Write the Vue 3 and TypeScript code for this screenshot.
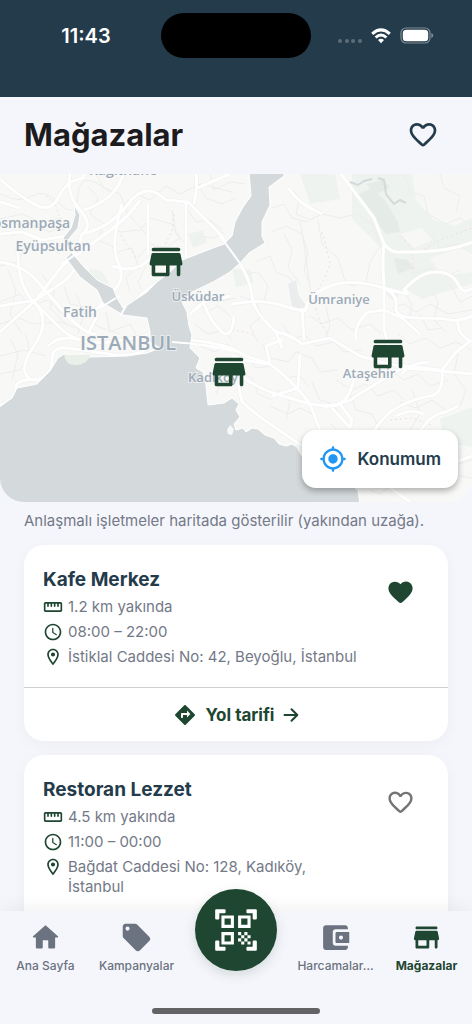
<script setup lang="ts">
import { ref } from 'vue'

interface Store {
  id: number
  name: string
  distance: string
  hours: string
  address: string
  favorite: boolean
}

interface Marker {
  name: string
  x: number
  y: number
}

interface Place {
  name: string
  x: number
  y: number
  size: number
}

interface NavItem {
  label: string
  icon: string
  active?: boolean
}

const icons = {
  store:
    'M5 6h14c.55 0 1-.45 1-1s-.45-1-1-1H5c-.55 0-1 .45-1 1s.45 1 1 1zm15.16 1.8c-.09-.46-.5-.8-.98-.8H4.82c-.48 0-.89.34-.98.8l-1 5c-.12.62.35 1.2.98 1.2H4v5c0 .55.45 1 1 1h8c.55 0 1-.45 1-1v-5h4v5c0 .55.45 1 1 1s1-.45 1-1v-5h.18c.63 0 1.1-.58.98-1.2l-1-5zM12 18H6v-4h6v4z',
  home:
    'M10 19v-5h4v5c0 .55.45 1 1 1h3c.55 0 1-.45 1-1v-7h1.7c.46 0 .68-.57.33-.87L12.67 3.6c-.38-.34-.96-.34-1.34 0l-8.36 7.53c-.34.3-.13.87.33.87H5v7c0 .55.45 1 1 1h3c.55 0 1-.45 1-1z',
  tag:
    'M21.41 11.58l-9-9C12.05 2.22 11.55 2 11 2H4c-1.1 0-2 .9-2 2v7c0 .55.22 1.05.59 1.42l9 9c.36.36.86.58 1.41.58s1.05-.22 1.41-.59l7-7c.37-.36.59-.86.59-1.41s-.23-1.06-.59-1.42zM5.5 7C4.67 7 4 6.33 4 5.5S4.67 4 5.5 4 7 4.67 7 5.5 6.33 7 5.5 7z',
  wallet:
    'M10 16V8c0-1.1.89-2 2-2h9V5c0-1.1-.9-2-2-2H5c-1.11 0-2 .9-2 2v14c0 1.1.89 2 2 2h14c1.1 0 2-.9 2-2v-1h-9c-1.11 0-2-.9-2-2zm3-8c-.55 0-1 .45-1 1v6c0 .55.45 1 1 1h9V8h-9zm3 5.5c-.83 0-1.5-.67-1.5-1.5s.67-1.5 1.5-1.5 1.5.67 1.5 1.5-.67 1.5-1.5 1.5z',
  heart:
    'M13.35 20.13c-.76.69-1.93.69-2.69-.01l-.11-.1C5.3 15.27 1.87 12.16 2 8.28c.06-1.7.93-3.33 2.34-4.29 2.64-1.8 5.9-.96 7.66 1.1 1.76-2.06 5.02-2.91 7.66-1.1 1.41.96 2.28 2.59 2.34 4.29.14 3.88-3.3 6.99-8.55 11.76l-.1.09z',
  heartOutline:
    'M19.66 3.99c-2.64-1.8-5.9-.96-7.66 1.1-1.76-2.06-5.02-2.91-7.66-1.1-1.4.96-2.28 2.58-2.34 4.29-.14 3.88 3.3 6.99 8.55 11.76l.1.09c.76.69 1.93.69 2.69-.01l.11-.1c5.25-4.76 8.68-7.87 8.55-11.75-.06-1.7-.94-3.32-2.34-4.28zM12.1 18.55l-.1.1-.1-.1C7.14 14.24 4 11.39 4 8.5 4 6.5 5.5 5 7.5 5c1.54 0 3.04.99 3.57 2.36h1.87C13.46 5.99 14.96 5 16.5 5c2 0 3.5 1.5 3.5 3.5 0 2.89-3.14 5.74-7.9 10.05z',
  ruler:
    'M21 6H3c-1.1 0-2 .9-2 2v8c0 1.1.9 2 2 2h18c1.1 0 2-.9 2-2V8c0-1.1-.9-2-2-2zm0 10H3V8h2v3c0 .55.45 1 1 1s1-.45 1-1V8h2v3c0 .55.45 1 1 1s1-.45 1-1V8h2v3c0 .55.45 1 1 1s1-.45 1-1V8h2v3c0 .55.45 1 1 1s1-.45 1-1V8h2v8z',
  clock:
    'M11.99 2C6.47 2 2 6.48 2 12s4.47 10 9.99 10C17.52 22 22 17.52 22 12S17.52 2 11.99 2zM12 20c-4.42 0-8-3.58-8-8s3.58-8 8-8 8 3.58 8 8-3.58 8-8 8zm-.22-13h-.06c-.4 0-.72.32-.72.72v4.72c0 .35.18.68.49.86l4.15 2.49c.34.2.78.1.98-.24.21-.34.1-.79-.25-.99l-3.87-2.3V7.72c0-.4-.32-.72-.72-.72z',
  pin:
    'M12 2C8.13 2 5 5.13 5 9c0 5.25 7 13 7 13s7-7.75 7-13c0-3.87-3.13-7-7-7zM7 9c0-2.76 2.24-5 5-5s5 2.24 5 5c0 2.88-2.88 7.19-5 9.88C9.92 16.21 7 11.85 7 9zm5-2.5a2.5 2.5 0 1 0 0 5 2.5 2.5 0 0 0 0-5z',
  directions:
    'M21.71 11.29l-9-9c-.39-.39-1.02-.39-1.41 0l-9 9c-.39.39-.39 1.02 0 1.41l9 9c.39.39 1.02.39 1.41 0l9-9c.39-.38.39-1.01 0-1.41zM14 14.5V12h-4v2c0 .55-.45 1-1 1s-1-.45-1-1v-3c0-.55.45-1 1-1h5V7.5l3.15 3.15c.2.2.2.51 0 .71L14 14.5z',
  locate:
    'M12 8c-2.21 0-4 1.79-4 4s1.79 4 4 4 4-1.79 4-4-1.79-4-4-4zm8.94 3c-.46-4.17-3.77-7.48-7.94-7.94V2c0-.55-.45-1-1-1s-1 .45-1 1v1.06C6.83 3.52 3.52 6.83 3.06 11H2c-.55 0-1 .45-1 1s.45 1 1 1h1.06c.46 4.17 3.77 7.48 7.94 7.94V22c0 .55.45 1 1 1s1-.45 1-1v-1.06c4.17-.46 7.48-3.77 7.94-7.94H22c.55 0 1-.45 1-1s-.45-1-1-1h-1.06zM12 19c-3.87 0-7-3.13-7-7s3.13-7 7-7 7 3.13 7 7-3.13 7-7 7z',
  qrCells:
    'M9.5 6.5v3h-3v-3h3M11 5H5v6h6V5zm-1.5 9.5v3h-3v-3h3M11 13H5v6h6v-6zm6.5-6.5v3h-3v-3h3M19 5h-6v6h6V5zm-6 8h1.5v1.5H13V13zm1.5 1.5H16V16h-1.5v-1.5zM16 13h1.5v1.5H16V13zm-3 3h1.5v1.5H13V16zm1.5 1.5H16V19h-1.5v-1.5zM16 16h1.5v1.5H16V16zm1.5-1.5H19V16h-1.5v-1.5zm0 3H19V19h-1.5v-1.5z',
  qrCorners:
    'M2 2.5Q2 2 2.5 2H6.5Q7 2 7 2.5V3.5Q7 4 6.5 4H4V6.5Q4 7 3.5 7H2.5Q2 7 2 6.5zM22 2.5Q22 2 21.5 2H17.5Q17 2 17 2.5V3.5Q17 4 17.5 4H20V6.5Q20 7 20.5 7H21.5Q22 7 22 6.5zM2 21.5Q2 22 2.5 22H6.5Q7 22 7 21.5V20.5Q7 20 6.5 20H4V17.5Q4 17 3.5 17H2.5Q2 17 2 17.5zM22 21.5Q22 22 21.5 22H17.5Q17 22 17 21.5V20.5Q17 20 17.5 20H20V17.5Q20 17 20.5 17H21.5Q22 17 22 17.5z',
}

const stores = ref<Store[]>([
  {
    id: 1,
    name: 'Kafe Merkez',
    distance: '1.2 km yakında',
    hours: '08:00 – 22:00',
    address: 'İstiklal Caddesi No: 42, Beyoğlu, İstanbul',
    favorite: true,
  },
  {
    id: 2,
    name: 'Restoran Lezzet',
    distance: '4.5 km yakında',
    hours: '11:00 – 00:00',
    address: 'Bağdat Caddesi No: 128, Kadıköy, İstanbul',
    favorite: false,
  },
])

const mapWidth = 472
const mapHeight = 328

const markers: Marker[] = [
  { name: 'Beyoğlu', x: 166, y: 88 },
  { name: 'Kadıköy', x: 229, y: 198 },
  { name: 'Ataşehir', x: 388, y: 180 },
]

const places: Place[] = [
  { name: 'Kağıthane', x: 123, y: 1, size: 14 },
  { name: 'Gaziosmanpaşa', x: 17, y: 54, size: 14 },
  { name: 'Eyüpsultan', x: 53, y: 77, size: 14 },
  { name: 'Üsküdar', x: 198, y: 127, size: 13 },
  { name: 'Ümraniye', x: 339, y: 130, size: 13 },
  { name: 'Fatih', x: 80, y: 143, size: 14 },
  { name: 'Kadıköy', x: 213, y: 208, size: 13 },
  { name: 'Ataşehir', x: 369, y: 204, size: 13 },
]

const parks: string[] = [
  'M352 0h120v110l-50 15-32-20-8-30-30-30z',
  'M300 0l35 0 5 25-30 5z',
  'M382 80l25-4 10 30-25 20-10-10z',
  'M440 245l32-12v40l-28-5z',
  'M188 60l15-4 4 12-14 6z',
  'M232 95l18 0 4 14-18 4z',
  'M90 95l12 2 8 14-12 6-10-12z',
]

const woods: string[] = [
  'M358 20l14-6 14 14 12 20 2 10-14 2-14-18z',
  'M366 10l18-4 6 8-14 6z',
  'M394 84l14 2 6 8-16 6z',
]

const clearings: string[] = [
  'M412 0h60v44l-18 8-20-6-18-20z',
  'M400 60l22-6 10 12-18 8z',
  'M430 84l30-10 12 4v20l-30 4z',
]

const minorRoads: string[] = [
  'M0 20Q20 30 32 22T60 30 78 20 110 18',
  'M0 45L22 40 40 48 62 44M12 62L30 50 50 58 66 50',
  'M0 92L18 88 24 74 44 70 60 80M0 128L20 120 30 132 48 126 62 140',
  'M8 96L16 116 10 140 22 160M0 150L18 144 34 150 60 148 88 158',
  'M0 182L24 176 46 182M0 200L20 196 30 180 26 160M12 206L18 180 10 164',
  'M42 100L54 118 50 134 66 150M64 112L70 130 92 134 96 152 120 160',
  'M76 120L84 140 78 160M106 138L110 158 130 150 140 168',
  'M88 12L98 24 90 40 104 50 98 66 112 72 118 90',
  'M96 0L104 14 120 20 128 40 146 60 150 80',
  'M124 30L136 20 150 26 166 12 180 20 200 10 232 18',
  'M120 58L140 56 150 44 172 50 180 64 166 74 150 70 138 84',
  'M118 78L132 74 138 92 126 104 130 118M146 92L138 108 142 116',
  'M186 34L196 48 210 46 222 56M198 10L206 24 222 30 236 24M172 36L176 60 186 70',
  'M210 0L214 16 230 8 246 10M194 72L200 62 214 64 224 58',
  'M288 12L300 24 296 40 310 46 322 40 340 44 356 40 372 50 378 66',
  'M272 34L284 30 292 44 308 48M272 58L286 52 302 60 308 78 304 96 310 110',
  'M300 46L304 70 308 100 312 130M318 46L322 70 338 84 344 104 352 112 366 108 370 88 380 72',
  'M256 88L270 82 276 98 290 104 298 120 292 130M284 60L292 76 288 94 300 110',
  'M246 100L258 98 268 112 264 126 280 132M240 122L256 128 262 142 250 152 258 168',
  'M196 128L208 138 218 132 230 142M204 118L214 128 236 124M194 150L208 160 224 156 232 166',
  'M200 172L216 178 226 170 240 178M212 190L222 206 216 220M206 206L218 212 232 208',
  'M244 180L256 194 272 192 284 204 300 202 308 212M240 198L252 204 258 220 272 226',
  'M262 170L270 184 288 188 296 178 312 184 320 198 338 196',
  'M282 150L292 164 306 162 316 172 334 168 344 178 362 176',
  'M310 142L322 150 338 144 352 156 370 150 382 160M326 132L330 152 324 168',
  'M270 232L288 240 300 234 316 242M278 216L290 228 286 246M312 208L320 226 334 230 342 248',
  'M336 206L352 216 366 210 378 222 394 216 404 226M350 220L356 236 372 240 380 256',
  'M390 196L404 206 418 200 430 212 448 206M398 160L410 170 426 164 440 174 456 168 472 176',
  'M392 134L404 130 416 138 430 130 448 140 472 136M404 116L412 132 408 150',
  'M430 112L438 128 434 146 446 158M450 110L460 128 472 122M420 140L428 156 442 154',
  'M404 0L410 18 424 22 428 40 446 50 460 44 472 52M440 0L444 14 460 22 456 38',
  'M432 60L440 74 458 70 472 80M398 90L412 100 430 94 446 102 460 96',
  'M400 228L416 234 432 226 446 236M412 216L420 240 410 256M458 180L454 200 466 216 460 232',
  'M368 262L384 268 400 260 420 270M362 300L378 306 396 298 420 306 450 300 472 304',
  'M370 316L380 320 390 312 404 324M450 270L458 290 472 286M330 250L344 262 340 276 354 284',
]

const mainRoads: string[] = [
  'M0 5Q14 18 32 29T58 24 76 6 84 0',
  'M70 0Q66 20 80 36T82 60Q78 78 62 92L36 126 0 158',
  'M82 60Q110 54 128 30T166 26L188 28 220 60 240 90Q250 105 252 122T276 158L282 174',
  'M84 36Q108 28 118 12L124 0',
  'M62 92Q86 74 108 58T140 26',
  'M148 30L148 80M186 28L186 84M194 30Q198 14 196 0M198 14Q210 8 230 0',
  'M122 30Q110 70 118 88T114 116 100 134',
  'M0 88Q24 92 36 106T66 140 96 160',
  'M18 70Q16 110 34 128T34 172 32 206',
  'M0 132L36 126 66 106 78 92',
  'M34 128L60 154Q80 172 110 168T148 160',
  'M66 140Q84 148 100 132L120 122',
  'M88 160L98 140M48 172Q60 160 80 166',
  'M0 232Q16 224 16 214T38 206Q52 200 52 186T66 174Q86 176 108 180T148 175L156 160',
  'M112 92Q138 100 150 84L164 82',
  'M0 28L20 34M0 60L22 58 42 66 66 62',
  'M125 140Q140 118 158 108',
  'M341 0L374 44 384 70Q392 80 402 78 450 78 472 68',
  'M384 70Q382 90 384 110V152Q386 168 392 180',
  'M232 130Q260 124 284 132T306 134Q310 120 330 112T384 114 404 116Q420 98 436 98T458 110 472 114',
  'M384 114Q398 120 396 132T418 144 450 146 472 142M458 146Q456 160 472 168',
  'M302 134L304 166M356 166Q354 150 368 138L384 136 402 144 420 160',
  'M288 14Q300 30 314 36L322 40',
  'M204 130Q212 150 222 158T234 142M190 140L204 128 230 122',
  'M190 166Q230 170 246 182L270 190Q292 206 310 230L324 232Q348 230 356 222L402 194 430 196 472 200',
  'M232 182Q248 188 270 190L266 172 282 166M276 158Q290 160 302 170L330 164 360 182 388 190 440 196',
  'M236 198Q256 214 276 220T310 230L320 256M324 232Q346 234 352 212T372 206',
  'M300 180L298 214 272 222M238 210L242 228Q260 244 276 254L302 272',
  'M372 260Q384 240 400 232T430 222 442 196L456 178 472 166',
  'M402 200Q408 190 428 188M332 234L350 254 352 246 340 230',
  'M362 296L388 312 410 328M388 270L420 288 450 290 472 282',
  'M420 258Q430 240 446 238L458 232M424 240Q410 234 396 242',
]

const tracks: string[] = [
  'M54 26L60 44 64 60M116 52L126 70 138 86',
  'M174 40L172 58 164 72M46 22L56 30',
  'M322 58L326 72 330 90 324 106 318 116',
  'M316 134L320 148 328 160M232 156L244 158 256 162',
  'M402 62L412 76 414 100M420 78L440 66 472 54',
  'M390 246L412 244 434 252',
]

const mainNav: NavItem[] = [
  { label: 'Ana Sayfa', icon: icons.home },
  { label: 'Kampanyalar', icon: icons.tag },
]

const sideNav: NavItem[] = [
  { label: 'Harcamalar…', icon: icons.wallet },
  { label: 'Mağazalar', icon: icons.store, active: true },
]

function markerStyle(marker: Marker) {
  return {
    left: `${(marker.x / mapWidth) * 100}%`,
    top: `${(marker.y / mapHeight) * 100}%`,
  }
}

function toggleFavorite(store: Store) {
  store.favorite = !store.favorite
}
</script>

<template>
  <div class="screen">
    <div class="status">
      <span class="time">11:43</span>
      <span class="island"></span>
      <span class="signals">
        <svg width="24" height="16" viewBox="0 0 24 16" fill="#5c6d7a" aria-hidden="true">
          <circle cx="2" cy="13" r="2" /><circle cx="9" cy="13" r="2" />
          <circle cx="15" cy="13" r="2" /><circle cx="22" cy="13" r="2" />
        </svg>
        <svg width="20" height="16" viewBox="0 0 20 16" aria-hidden="true">
          <g fill="none" stroke="#fff" stroke-width="3">
            <path d="M1.2 5.8Q10-2 18.8 5.8" />
            <path d="M4.6 9.5Q10 4.6 15.4 9.5" />
          </g>
          <path fill="#fff" d="M7 12Q10 9.6 13 12L10 15.2z" />
        </svg>
        <svg width="34" height="17" viewBox="0 0 34 17" aria-hidden="true">
          <rect x="1" y="1" width="29" height="15" rx="5" fill="none" stroke="#7d8b95" stroke-width="1.2" />
          <rect x="2.8" y="2.8" width="25.4" height="11.4" rx="3.5" fill="#fff" />
          <path d="M31.3 6Q33.3 6.8 33.3 8.5T31.3 11z" fill="#7d8b95" />
        </svg>
      </span>
    </div>

    <header class="header">
      <h1>Mağazalar</h1>
      <button class="icon-button header-heart" type="button" aria-label="Favoriler">
        <svg width="32" height="32" viewBox="0 0 24 24" fill="currentColor"><path :d="icons.heartOutline" /></svg>
      </button>
    </header>

    <main class="content">
      <section class="map" aria-label="Harita">
        <svg class="map-canvas" viewBox="0 0 472 328" preserveAspectRatio="none" aria-hidden="true">
          <rect width="472" height="328" fill="#f8f9f7" />
          <g fill="#eff3ef"><path v-for="d in parks" :key="d" :d="d" /></g>
          <g fill="#e5ece8"><path v-for="d in woods" :key="d" :d="d" /></g>
          <g fill="#f7f8f6"><path v-for="d in clearings" :key="d" :d="d" /></g>
          <path d="M288 110l8-4 2 14 8 12-6 6-8-6z" fill="#ebeced" />
          <g fill="none" stroke="#ecedec" stroke-width="1" stroke-linejoin="round">
            <path v-for="d in minorRoads" :key="d" :d="d" />
          </g>
          <g fill="none" stroke="#f1dcdc" stroke-width="1" stroke-dasharray="2 3">
            <path v-for="d in tracks" :key="d" :d="d" />
          </g>
          <g fill="none" stroke="#edeeed" stroke-width="4" stroke-linejoin="round">
            <path v-for="d in mainRoads" :key="d" :d="d" />
          </g>
          <g fill="none" stroke="#fff" stroke-width="3" stroke-linejoin="round">
            <path v-for="d in mainRoads" :key="d" :d="d" />
          </g>
          <path d="M350 8l8 3 6-4 8-2M378 4l6 2 2 14 8 10 6-4 6 3" fill="none" stroke="#d4dadc" stroke-width="2" />
          <path
            fill="#d4dadc"
            stroke="#fff"
            stroke-width="1"
            stroke-linejoin="round"
            d="M249 -2L251 22 243 33 235 48 232 62 224 70 213 74 182 86 170 98 157 108 147 118 123 134 117 124 113 114 97 106 85 94 72 79 63 64 71 54 75 41 74 31 80 41 78 54 68 66 74 76 66 84 80 103 97 116 103 129 123 141 147 144 150 158 150 168 160 174 147 179 127 182 90 183 64 180 58 184 50 197 37 210 17 214 12 224 -2 234V330H360L358 316 344 306 302 282 297 273 292 270 286 272 279 270 274 264 265 261 258 255 252 254 246 258 243 254 236 256 234 250 240 243 236 236 239 230 232 224 224 229 208 231 206 211 203 198 196 194 200 184 190 174 192 161 189 152 187 138 182 128 192 118 213 108 230 98 240 89 249 79 265 69 262 62 262 48 270 31 269 13 284 2V-2z"
          />
          <path d="M64 181h26q-2 9-13 10t-13-10z" fill="#e9efe9" />
          <path d="M227 256l3-5 4 4-2 6-4-1z" fill="#f8f9f7" />
          <g fill="none" stroke="#fff" stroke-width="2">
            <path d="M220 62L242 92M62 90L76 80M100 134L116 124M120 142L126 132M172 168Q206 170 240 178" />
          </g>
          <g class="places">
            <text v-for="place in places" :key="place.name" :x="place.x" :y="place.y" :font-size="place.size">{{ place.name }}</text>
            <text x="128" y="176" font-size="20">ISTANBUL</text>
          </g>
        </svg>
        <button
          v-for="marker in markers"
          :key="marker.name"
          class="marker"
          type="button"
          :aria-label="marker.name"
          :style="markerStyle(marker)"
        >
          <svg width="43" height="43" viewBox="0 0 24 24" fill="currentColor"><path :d="icons.store" /></svg>
        </button>
        <button class="locate" type="button">
          <svg width="28" height="28" viewBox="0 0 24 24" fill="#2196f3" aria-hidden="true"><path :d="icons.locate" /></svg>
          Konumum
        </button>
      </section>

      <p class="note">Anlaşmalı işletmeler haritada gösterilir (yakından uzağa).</p>

      <div class="cards">
        <article v-for="store in stores" :key="store.id" class="card">
          <div class="card-body">
            <div class="info">
              <h2>{{ store.name }}</h2>
              <div class="row">
                <svg width="20" height="20" viewBox="0 0 24 24" aria-hidden="true"><path :d="icons.ruler" /></svg>
                <span>{{ store.distance }}</span>
              </div>
              <div class="row">
                <svg width="20" height="20" viewBox="0 0 24 24" aria-hidden="true"><path :d="icons.clock" /></svg>
                <span>{{ store.hours }}</span>
              </div>
              <div class="row">
                <svg width="20" height="20" viewBox="0 0 24 24" aria-hidden="true"><path :d="icons.pin" /></svg>
                <span>{{ store.address }}</span>
              </div>
            </div>
            <button
              class="icon-button"
              :class="{ favorite: store.favorite }"
              type="button"
              :aria-label="`${store.name} favori`"
              :aria-pressed="store.favorite"
              @click="toggleFavorite(store)"
            >
              <svg width="29" height="29" viewBox="0 0 24 24" fill="currentColor">
                <path :d="store.favorite ? icons.heart : icons.heartOutline" />
              </svg>
            </button>
          </div>
          <button class="route" type="button">
            <svg width="24" height="24" viewBox="0 0 24 24" fill="currentColor" aria-hidden="true"><path :d="icons.directions" /></svg>
            <span>Yol tarifi</span>
            <svg class="arrow" width="16" height="16" viewBox="0 0 16 16" aria-hidden="true">
              <path d="M1.5 8H14M8.5 2.2L14.3 8L8.5 13.8" />
            </svg>
          </button>
        </article>
      </div>
    </main>

    <nav class="nav">
      <div class="nav-items">
        <a v-for="item in mainNav" :key="item.label" class="nav-item" href="#">
          <svg width="33" height="33" viewBox="0 0 24 24" fill="currentColor" aria-hidden="true"><path :d="item.icon" /></svg>
          <span>{{ item.label }}</span>
        </a>
        <div class="nav-gap"></div>
        <a v-for="item in sideNav" :key="item.label" class="nav-item" :class="{ active: item.active }" href="#">
          <svg width="33" height="33" viewBox="0 0 24 24" fill="currentColor" aria-hidden="true"><path :d="item.icon" /></svg>
          <span>{{ item.label }}</span>
        </a>
      </div>
      <button class="scan" type="button" aria-label="QR kod tara">
        <svg width="50" height="50" viewBox="0 0 24 24" fill="currentColor">
          <path :d="icons.qrCells" />
          <path :d="icons.qrCorners" />
        </svg>
      </button>
      <div class="home-indicator"></div>
    </nav>
  </div>
</template>

<style>
body {
  margin: 0;
  background: #f5f6fb;
}
</style>

<style scoped>
.screen {
  display: flex;
  flex-direction: column;
  height: 100vh;
  overflow: hidden;
  background: #f5f6fb;
  color: #243b4b;
  font-family: Inter, 'Noto Sans', sans-serif;
}

button {
  padding: 0;
  border: 0;
  background: none;
  color: inherit;
  font: inherit;
  cursor: pointer;
}

svg {
  display: block;
  flex: none;
}

.status {
  display: grid;
  grid-template-columns: 1fr 150px 1fr;
  flex: none;
  align-items: center;
  padding: 13px 0 39px;
  background: #243b4b;
}

.time {
  padding-left: 11px;
  color: #fff;
  font-size: 20px;
  font-weight: 600;
  line-height: 24px;
  text-align: center;
}

.island {
  height: 45px;
  border-radius: 23px;
  background: #000;
}

.signals {
  display: flex;
  align-items: center;
  justify-content: center;
  gap: 9px;
  padding-right: 12px;
}

.header {
  display: flex;
  flex: none;
  align-items: center;
  justify-content: space-between;
  padding: 14px 25px 15px 24px;
}

h1 {
  margin: 0;
  color: #1c1b20;
  font-size: 31px;
  font-weight: 700;
  line-height: 40px;
}

.icon-button {
  display: grid;
  flex: none;
  width: 48px;
  height: 48px;
  place-items: center;
  border-radius: 50%;
  color: #757575;
}

.icon-button.header-heart {
  color: #243b4b;
}

.icon-button.favorite {
  color: #1e4630;
}

.content {
  flex: 1;
  min-height: 0;
  overflow: hidden;
}

.map {
  position: relative;
  height: 328px;
  overflow: hidden;
  border-radius: 0 0 24px 24px;
}

.map-canvas {
  width: 100%;
  height: 100%;
}

.places {
  fill: #9caab8;
  stroke: rgba(248, 249, 247, 0.6);
  stroke-width: 2px;
  paint-order: stroke;
  font-family: 'Open Sans', 'Noto Sans', sans-serif;
  font-weight: 600;
  text-anchor: middle;
}

.marker {
  position: absolute;
  color: #1e4630;
  transform: translate(-50%, -50%);
}

.locate {
  position: absolute;
  right: 14px;
  bottom: 14px;
  display: flex;
  align-items: center;
  gap: 11px;
  padding: 15px 17px;
  border-radius: 14px;
  background: #fff;
  box-shadow: 0 3px 6px rgba(0, 0, 0, 0.3);
  font-size: 17px;
  font-weight: 600;
  line-height: 28px;
}

.note {
  margin: 9px 24px 14px;
  color: #747987;
  font-size: 15px;
  line-height: 20px;
}

.cards {
  display: grid;
  gap: 14px;
  padding: 0 24px;
}

.card {
  overflow: hidden;
  border-radius: 20px;
  background: #fff;
  box-shadow: 0 4px 14px rgba(36, 59, 75, 0.04);
}

.card-body {
  display: flex;
  align-items: flex-start;
  justify-content: space-between;
  gap: 12px;
  padding: 23px 24px 20px 19px;
}

.info {
  display: grid;
  gap: 5px;
}

h2 {
  margin: 0;
  font-size: 19px;
  font-weight: 700;
  line-height: 24px;
}

.row {
  display: flex;
  gap: 5px;
  color: #747987;
  font-size: 15px;
  line-height: 20px;
}

.row svg {
  fill: #1e4630;
}

.route {
  display: flex;
  width: 100%;
  align-items: center;
  justify-content: center;
  gap: 9px;
  padding: 15px 0 14px;
  border-top: 1px solid #cdd0d3;
  color: #1e4630;
  font-size: 17px;
  font-weight: 700;
  line-height: 24px;
}

.arrow {
  fill: none;
  stroke: currentColor;
  stroke-width: 2;
  stroke-linecap: round;
  stroke-linejoin: round;
}

.nav {
  position: relative;
  flex: none;
  padding: 10px 0;
  background: #f5f6fb;
  box-shadow: 0 -4px 16px rgba(0, 0, 0, 0.05);
}

.nav-items {
  display: flex;
}

.nav-item {
  display: grid;
  flex: 1;
  justify-items: center;
  gap: 4px;
  color: #6b7280;
  font-size: 12px;
  font-weight: 500;
  line-height: 16px;
  text-decoration: none;
}

.nav-item.active {
  color: #1e4630;
  font-weight: 700;
}

.nav-gap {
  width: 108px;
}

.scan {
  position: absolute;
  top: -22px;
  left: calc(50% - 41px);
  display: grid;
  width: 82px;
  height: 82px;
  place-items: center;
  border-radius: 50%;
  background: #1e4630;
  box-shadow: 0 4px 12px rgba(30, 70, 48, 0.15);
  color: #fff;
}

.home-indicator {
  width: 168px;
  height: 6px;
  margin: 34px auto 0;
  border-radius: 3px;
  background: #636366;
}
</style>
